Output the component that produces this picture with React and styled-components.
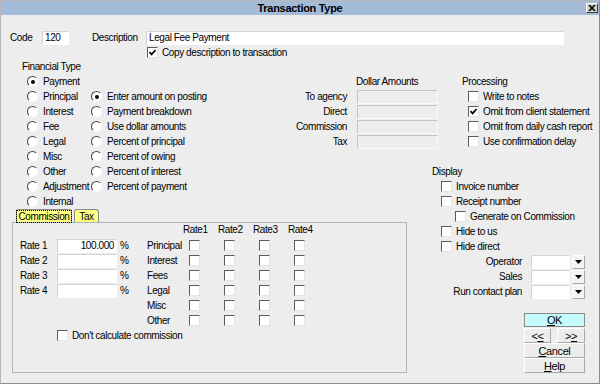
import React from "react";
import styled, { createGlobalStyle } from "styled-components";

const GlobalStyle = createGlobalStyle`
  html, body { margin: 0; padding: 0; background: #ededed; }
  body {
    font-family: "Liberation Sans", Arial, sans-serif;
    font-size: 10px;
    color: #000;
  }
`;

const Window = styled.div`
  width: 600px;
  height: 384px;
  box-sizing: border-box;
  border: 1px solid #b8b8b8;
  border-right-color: #8c8c8c;
  border-bottom-color: #8c8c8c;
  background: #ededed;
  letter-spacing: -0.4px;
  overflow: hidden;
`;

const TitleBar = styled.div`
  height: 14px;
  background: #a3bbd9;
  display: grid;
  grid-template-columns: 16px 1fr 16px;
  align-items: center;
`;

const Title = styled.div`
  grid-column: 2;
  text-align: center;
  font-size: 11px;
  font-weight: bold;
  letter-spacing: -0.3px;
  line-height: 14px;
`;

const CloseButton = styled.div`
  justify-self: end;
  margin-right: 1px;
  width: 12px;
  height: 10px;
  box-sizing: border-box;
  background: #d4d0c8;
  border: 1px solid;
  border-color: #fff #404040 #404040 #fff;
  display: grid;
  place-items: center;
`;

const Body = styled.div`
  padding: 15px 0 0 9px;
`;

const TopRow = styled.div`
  display: flex;
  align-items: center;
  height: 15px;
`;

const Label = styled.span`
  display: inline-block;
  width: ${(p) => p.$w || "auto"};
  margin-left: ${(p) => p.$ml || "0"};
  text-align: ${(p) => p.$align || "left"};
  white-space: nowrap;
`;

const TextInput = styled.div`
  width: ${(p) => p.$w};
  height: 14px;
  box-sizing: border-box;
  background: ${(p) => (p.$disabled ? "#ededed" : "#fff")};
  border: 1px solid;
  border-color: ${(p) =>
    p.$disabled ? "#c4c4c4 #f8f8f8 #f8f8f8 #c4c4c4" : "#d4d4d4 #fff #fff #d4d4d4"};
  padding: 0 2px;
  line-height: 12px;
  text-align: ${(p) => p.$align || "left"};
  white-space: nowrap;
  overflow: hidden;
`;

const CheckRow = styled.div`
  display: flex;
  align-items: center;
  gap: 4px;
  height: ${(p) => p.$h || "15px"};
  padding-left: ${(p) => p.$indent || "0"};
  white-space: nowrap;
`;

const Box = styled.span`
  flex: none;
  width: 11px;
  height: 11px;
  box-sizing: border-box;
  background: #fff;
  border: 1px solid;
  border-color: #5c5c5c #e4e4e4 #e4e4e4 #5c5c5c;
  display: grid;
  place-items: center;
`;

const RadioDot = styled.span`
  flex: none;
  width: 11px;
  height: 11px;
  box-sizing: border-box;
  border-radius: 50%;
  background: #fff;
  border: 1.5px solid;
  border-color: #444 #fafafa #fafafa #444;
  display: grid;
  place-items: center;

  &::after {
    content: "";
    width: 4px;
    height: 4px;
    border-radius: 50%;
    background: ${(p) => (p.$on ? "#000" : "transparent")};
  }
`;

const RadioRow = styled.div`
  display: flex;
  align-items: center;
  gap: 5px;
  height: 15px;
  white-space: nowrap;
  grid-column: ${(p) => p.$col || "auto"};
`;

const MainGrid = styled.div`
  display: grid;
  grid-template-columns: 421px 1fr;
`;

const LeftCol = styled.div`
  display: flex;
  flex-direction: column;
`;

const UpperLeft = styled.div`
  display: flex;
`;

const FinGroup = styled.div`
  width: 277px;
  flex: none;
`;

const GroupHeading = styled.div`
  height: ${(p) => p.$h || "15px"};
  line-height: ${(p) => p.$h || "15px"};
  padding-left: ${(p) => p.$pl || "0"};
  margin-top: ${(p) => p.$mt || "0"};
`;

const RadioGrid = styled.div`
  display: grid;
  grid-template-columns: 64px auto;
  padding-left: 17px;
`;

const DollarGroup = styled.div`
  flex: none;
  padding-top: 15px;
`;

const DollarGrid = styled.div`
  display: grid;
  grid-template-columns: 60px 81px;
  column-gap: 10px;
  grid-auto-rows: 15px;
  align-items: center;
`;

const TabStrip = styled.div`
  display: flex;
  gap: 2px;
  margin-left: 6px;
  height: 13px;
  position: relative;
  z-index: 1;
`;

const Tab = styled.div`
  width: ${(p) => p.$w};
  box-sizing: border-box;
  background: #ffff80;
  border: 1px solid #8a8a8a;
  border-bottom: none;
  border-radius: 3px 3px 0 0;
  display: grid;
  place-items: center;
  line-height: 11px;
`;

const Focus = styled.span`
  outline: 1px dotted #000;
  padding: 0 1px;
`;

const Panel = styled.div`
  margin-left: 2px;
  width: 395px;
  height: 151px;
  box-sizing: border-box;
  border: 1px solid #b4b4b4;
  display: grid;
  grid-template-columns: 37px 60px 30px 36px 35px 35px 35px 35px;
  grid-template-rows: 15px repeat(7, 15px);
  align-content: start;
  align-items: center;
  padding-left: 7px;
`;

const ColHead = styled.div`
  grid-row: 1;
  grid-column: ${(p) => p.$col};
  align-self: start;
  padding-top: 1px;
`;

const Cell = styled.div`
  grid-row: ${(p) => p.$row};
  grid-column: ${(p) => p.$col};
  padding-left: ${(p) => p.$pl || "0"};
  display: flex;
  align-items: center;
  white-space: nowrap;
`;

const RightCol = styled.div`
  display: flex;
  flex-direction: column;
`;

const ComboGrid = styled.div`
  display: grid;
  grid-template-columns: 91px 39px 13px;
  column-gap: 9px;
  grid-auto-rows: 15px;
  align-items: center;
  & > :nth-child(3n) {
    margin-left: -7px;
  }
`;

const DropButton = styled.div`
  width: 13px;
  height: 14px;
  box-sizing: border-box;
  background: #f4f4f4;
  border: 1px solid;
  border-color: #fff #a8a8a8 #a8a8a8 #fff;
  display: grid;
  place-items: center;
`;

const ButtonStack = styled.div`
  margin-top: 14px;
  margin-left: 93px;
  width: 61px;
  display: grid;
  grid-template-columns: 27px 28px;
  column-gap: 6px;
  grid-auto-rows: 15px;
`;

const Button = styled.div`
  grid-column: ${(p) => p.$span || "auto"};
  box-sizing: border-box;
  background: ${(p) => (p.$primary ? "#c4fcfc" : "#ededed")};
  border: 1px solid;
  border-color: ${(p) =>
    p.$primary ? "#8a8a8a" : "#ffffff #a8a8a8 #a8a8a8 #ffffff"};
  display: grid;
  place-items: center;
  line-height: 12px;
  font-size: 11px;
  height: ${(p) => (p.$primary ? "14px" : "15px")};

  u {
    text-decoration: underline;
  }
`;

function Check({ checked, children, indent, h }) {
  return (
    <CheckRow $indent={indent} $h={h}>
      <Box>
        {checked && (
          <svg width="9" height="9" viewBox="0 0 9 9">
            <path d="M1.5 4.2 L3.6 6.4 L7.6 2" stroke="#000" strokeWidth="1.7" fill="none" />
          </svg>
        )}
      </Box>
      <span>{children}</span>
    </CheckRow>
  );
}

function Radio({ on, col, children }) {
  return (
    <RadioRow $col={col}>
      <RadioDot $on={on} />
      <span>{children}</span>
    </RadioRow>
  );
}

const financial = ["Payment", "Principal", "Interest", "Fee", "Legal", "Misc", "Other", "Adjustment", "Internal"];
const amountModes = [
  "Enter amount on posting",
  "Payment breakdown",
  "Use dollar amounts",
  "Percent of principal",
  "Percent of owing",
  "Percent of interest",
  "Percent of payment",
];
const dollarRows = ["To agency", "Direct", "Commission", "Tax"];
const commissionRows = ["Principal", "Interest", "Fees", "Legal", "Misc", "Other"];
const rates = [
  { label: "Rate 1", value: "100.000" },
  { label: "Rate 2", value: "" },
  { label: "Rate 3", value: "" },
  { label: "Rate 4", value: "" },
];

function Arrow() {
  return (
    <svg width="7" height="4" viewBox="0 0 7 4">
      <path d="M0 0 H7 L3.5 4 Z" fill="#000" />
    </svg>
  );
}

export default function App() {
  return (
    <>
      <GlobalStyle />
      <Window>
        <TitleBar>
          <Title>Transaction Type</Title>
          <CloseButton>
            <svg width="8" height="6" viewBox="0 0 8 6">
              <path d="M1 0 L7 6 M7 0 L1 6" stroke="#000" strokeWidth="1.6" />
            </svg>
          </CloseButton>
        </TitleBar>

        <Body>
          <TopRow>
            <Label $w="32px">Code</Label>
            <TextInput $w="27px">120</TextInput>
            <Label $w="54px" $ml="23px">Description</Label>
            <TextInput $w="418px">Legal Fee Payment</TextInput>
          </TopRow>
          <Check checked indent="137px" h="14px">Copy description to transaction</Check>

          <MainGrid>
            <LeftCol>
              <UpperLeft>
                <FinGroup>
                  <GroupHeading $pl="12px">Financial Type</GroupHeading>
                  <RadioGrid>
                    {financial.map((f, i) => (
                      <React.Fragment key={f}>
                        <Radio on={i === 0} col={1}>{f}</Radio>
                        {i > 0 && i <= amountModes.length && (
                          <Radio on={i === 1} col={2}>{amountModes[i - 1]}</Radio>
                        )}
                      </React.Fragment>
                    ))}
                  </RadioGrid>
                </FinGroup>

                <DollarGroup>
                  <GroupHeading $pl="69px">Dollar Amounts</GroupHeading>
                  <DollarGrid>
                    {dollarRows.map((d) => (
                      <React.Fragment key={d}>
                        <Label $align="right">{d}</Label>
                        <TextInput $w="81px" $disabled />
                      </React.Fragment>
                    ))}
                  </DollarGrid>
                </DollarGroup>
              </UpperLeft>

              <TabStrip>
                <Tab $w="56px"><Focus>Commission</Focus></Tab>
                <Tab $w="25px">Tax</Tab>
              </TabStrip>
              <Panel>
                {["Rate1", "Rate2", "Rate3", "Rate4"].map((r, i) => (
                  <ColHead key={r} $col={5 + i}>{r}</ColHead>
                ))}
                {rates.map((r, i) => (
                  <React.Fragment key={r.label}>
                    <Cell $row={2 + i} $col={1}>{r.label}</Cell>
                    <Cell $row={2 + i} $col={2}>
                      <TextInput $w="60px" $align="right">{r.value}</TextInput>
                    </Cell>
                    <Cell $row={2 + i} $col={3} $pl="3px">%</Cell>
                  </React.Fragment>
                ))}
                {commissionRows.map((c, i) => (
                  <React.Fragment key={c}>
                    <Cell $row={2 + i} $col={4}>{c}</Cell>
                    {[5, 6, 7, 8].map((col) => (
                      <Cell key={col} $row={2 + i} $col={col} $pl="6px">
                        <Box />
                      </Cell>
                    ))}
                  </React.Fragment>
                ))}
                <Cell $row={8} $col="2 / span 5">
                  <Check>Don't calculate commission</Check>
                </Cell>
              </Panel>
            </LeftCol>

            <RightCol>
              <GroupHeading $pl="31px" $mt="15px">Processing</GroupHeading>
              <Check indent="37px">Write to notes</Check>
              <Check indent="37px" checked>Omit from client statement</Check>
              <Check indent="37px">Omit from daily cash report</Check>
              <Check indent="37px">Use confirmation delay</Check>

              <GroupHeading $pl="1px" $mt="15px">Display</GroupHeading>
              <Check indent="10px">Invoice number</Check>
              <Check indent="10px">Receipt number</Check>
              <Check indent="24px">Generate on Commission</Check>
              <Check indent="10px">Hide to us</Check>
              <Check indent="10px">Hide direct</Check>

              <ComboGrid>
                {["Operator", "Sales", "Run contact plan"].map((c) => (
                  <React.Fragment key={c}>
                    <Label $align="right">{c}</Label>
                    <TextInput $w="39px" />
                    <DropButton><Arrow /></DropButton>
                  </React.Fragment>
                ))}
              </ComboGrid>

              <ButtonStack>
                <Button $primary $span="1 / span 2"><span><u>O</u>K</span></Button>
                <Button><span>&lt;<u>&lt;</u></span></Button>
                <Button><span>&gt;<u>&gt;</u></span></Button>
                <Button $span="1 / span 2"><span><u>C</u>ancel</span></Button>
                <Button $span="1 / span 2"><span><u>H</u>elp</span></Button>
              </ButtonStack>
            </RightCol>
          </MainGrid>
        </Body>
      </Window>
    </>
  );
}
